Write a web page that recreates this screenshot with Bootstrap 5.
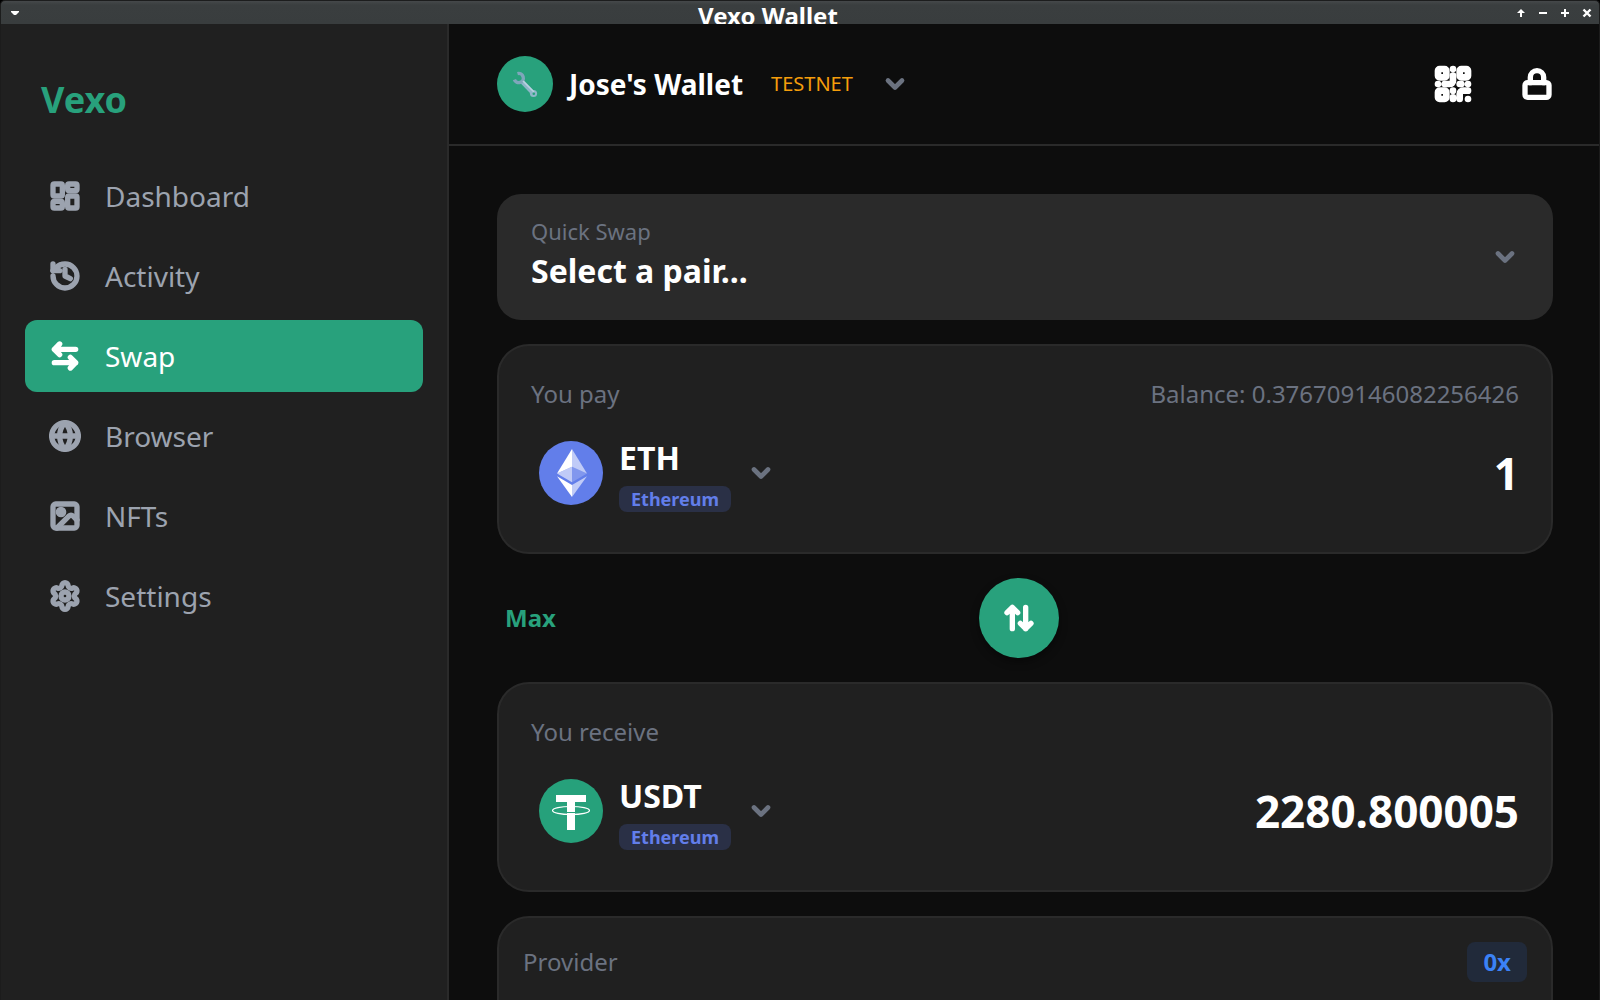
<!DOCTYPE html>
<html lang="en" data-bs-theme="dark">
<head>
<meta charset="utf-8">
<meta name="viewport" content="width=device-width, initial-scale=1">
<title>Vexo Wallet</title>
<link href="https://cdn.jsdelivr.net/npm/bootstrap@5.3.0/dist/css/bootstrap.min.css" rel="stylesheet">
<style>
:root { --green:#28a17c; --panel:#202020; --line:#2a2a2a; --base:#0d0d0d; --dim:#6b7280; --soft:#9ca3af; }
body { font-family:"Noto Sans", sans-serif; background:#000; color:#fff; font-size:24px; line-height:32px; }
svg { display:block; flex:none; }
.stroke { fill:none; stroke:currentColor; stroke-width:4; stroke-linecap:round; stroke-linejoin:round; }
.i28 { width:28px; height:28px; }
.i32 { width:32px; height:32px; }
.i40 { width:40px; height:40px; }
button { color:inherit; }
.plain { background:none; border:0; padding:0; }
.dim { color:var(--dim); }

.titlebar { height:24px; background:linear-gradient(#45484a, #3a3e3f 4px, #393d3e); border:solid #1c1d1d; border-width:1px 1px 0; border-radius:5px 5px 0 0; padding:0 7px 0 9px; overflow:hidden; }
.titlebar h1 { font-size:24px; line-height:30px; font-weight:700; height:23px; margin:0; }
.wm { width:10px; height:24px; display:flex; align-items:center; justify-content:center; }
.winctl { gap:12px; }

.app { border:solid #1c1c1c; border-width:0 1px; background:var(--base); min-height:0; }
.side { width:448px; background:var(--panel); border-right:2px solid var(--line); padding:24px; }
.brand { color:var(--green); font-size:36px; line-height:48px; font-weight:700; padding:28px 16px 36px; margin:0; }
.side .nav { gap:8px; }
.side .nav-link { display:flex; align-items:center; gap:24px; height:72px; padding:0 24px; border-radius:12px; font-size:28px; line-height:38px; color:var(--soft); }
.side .nav-link:hover { color:#fff; }
.side .nav-link.active { background:var(--green); color:#fff; }

.page { min-width:0; }
.topbar { padding:32px 46px 32px 48px; border-bottom:2px solid var(--line); }
.avatar { width:56px; height:56px; border-radius:50%; background:var(--green); }
.wallet-name { font-size:28px; line-height:40px; font-weight:700; }
.testnet { font-size:20px; line-height:28px; color:#f59e0b; margin:0 28px; }

.content { padding:48px 46px 0 48px; gap:24px; overflow:hidden; min-height:0; }
.content > * { flex:none; }
.quick { background:var(--line); border-radius:24px; padding:0 34px; text-align:left; height:126px; }
.quick .cap { font-size:22px; line-height:28px; }
.quick .pick { font-size:32px; line-height:44px; font-weight:700; }
.panel { background:var(--panel); border:2px solid var(--line); border-radius:32px; padding:32px; }
.token { padding:8px; gap:16px; text-align:left; }
.sym { font-size:32px; line-height:48px; font-weight:700; }
.chain { background:#2a3046; color:#627eea; font-size:18px; line-height:26px; font-weight:700; padding:0 12px; border-radius:8px; }
.amount { background:none; border:0; outline:0; color:#fff; font-size:44px; line-height:60px; font-weight:700; text-align:right; padding:0; min-width:0; flex:1; }
.maxbtn { color:var(--green); font-weight:700; padding:0 8px; }
.flip { width:80px; height:80px; border-radius:50%; background:var(--green); border:0; padding:0; color:#fff; box-shadow:0 4px 8px rgba(0,0,0,.4); }
.half { flex:1 1 0; }
.half-end { flex:1 1 12px; }
.provider { padding:24px; min-height:160px; }
.zerox { background:#212a3a; color:#3b82f6; font-weight:700; line-height:40px; padding:0 16px; border-radius:8px; }
</style>
<script src="https://cdn.jsdelivr.net/npm/bootstrap@5.3.0/dist/js/bootstrap.bundle.min.js"></script>
</head>
<body class="vh-100 overflow-hidden d-flex flex-column">

<svg width="0" height="0" class="position-absolute" aria-hidden="true">
  <symbol id="chev" viewBox="0 0 24 24"><path d="m6 9 6 6 6-6"/></symbol>
</svg>

<div class="titlebar d-flex justify-content-between flex-shrink-0">
  <button class="plain wm" aria-label="Window menu"><svg width="10" height="4" viewBox="0 0 10 4"><path d="M1 0h8v1L6 4H4L1 1z" fill="#fff"/></svg></button>
  <h1 class="flex-grow-1 text-center">Vexo Wallet</h1>
  <div class="d-flex winctl flex-shrink-0">
    <button class="plain wm" aria-label="Shade"><svg width="10" height="10" viewBox="0 0 10 10"><path d="M5 9V2" stroke="#fff" stroke-width="2"/><path d="M5 1 9 5H1z" fill="#fff"/></svg></button>
    <button class="plain wm" aria-label="Minimize"><svg width="10" height="10" viewBox="0 0 10 10"><path d="M1 5h8" stroke="#fff" stroke-width="2"/></svg></button>
    <button class="plain wm" aria-label="Maximize"><svg width="10" height="10" viewBox="0 0 10 10"><path d="M1 5h8M5 1v8" stroke="#fff" stroke-width="2"/></svg></button>
    <button class="plain wm" aria-label="Close"><svg width="10" height="10" viewBox="0 0 10 10"><path d="m1.500 1.500 7 7m0-7-7 7" stroke="#fff" stroke-width="2.400"/></svg></button>
  </div>
</div>

<div class="app d-flex flex-grow-1">
  <aside class="side flex-shrink-0">
    <p class="brand">Vexo</p>
    <nav class="nav flex-column">
      <a class="nav-link" href="#"><svg class="stroke i32" viewBox="0 0 24 24"><rect x="3" y="3" width="7" height="9" rx="1"/><rect x="14" y="3" width="7" height="5" rx="1"/><rect x="14" y="12" width="7" height="9" rx="1"/><rect x="3" y="16" width="7" height="5" rx="1"/></svg>Dashboard</a>
      <a class="nav-link" href="#"><svg class="stroke i32" viewBox="0 0 24 24"><path d="M3 12a9 9 0 1 0 9-9 9.75 9.75 0 0 0-6.740 2.740L3 8"/><path d="M3 3v5h5M12 7v5l4 2"/></svg>Activity</a>
      <a class="nav-link active" aria-current="page" href="#"><svg class="stroke i32" viewBox="0 0 24 24"><path d="M8 3 4 7l4 4M4 7h16M16 21l4-4-4-4M20 17H4"/></svg>Swap</a>
      <a class="nav-link" href="#"><svg class="stroke i32" viewBox="0 0 24 24"><circle cx="12" cy="12" r="10"/><path d="M12 2a14.500 14.500 0 0 0 0 20 14.500 14.500 0 0 0 0-20M2 12h20"/></svg>Browser</a>
      <a class="nav-link" href="#"><svg class="stroke i32" viewBox="0 0 24 24"><rect x="3" y="3" width="18" height="18" rx="2"/><circle cx="9" cy="9" r="2"/><path d="m21 15-3.086-3.086a2 2 0 0 0-2.828 0L6 21"/></svg>NFTs</a>
      <a class="nav-link" href="#"><svg class="stroke i32" viewBox="0 0 24 24"><path d="M9.671 4.136a2.340 2.340 0 0 1 4.659 0 2.340 2.340 0 0 0 3.319 1.915 2.340 2.340 0 0 1 2.330 4.033 2.340 2.340 0 0 0 0 3.831 2.340 2.340 0 0 1-2.330 4.033 2.340 2.340 0 0 0-3.319 1.915 2.340 2.340 0 0 1-4.659 0 2.340 2.340 0 0 0-3.320-1.915 2.340 2.340 0 0 1-2.330-4.033 2.340 2.340 0 0 0 0-3.831A2.340 2.340 0 0 1 6.350 6.051a2.340 2.340 0 0 0 3.319-1.915"/><circle cx="12" cy="12" r="3"/></svg>Settings</a>
    </nav>
  </aside>

  <main class="page flex-grow-1 d-flex flex-column">
    <header class="topbar d-flex align-items-center justify-content-between">
      <button class="plain d-flex align-items-center">
        <span class="avatar d-flex align-items-center justify-content-center me-3">
          <svg width="28" height="28" viewBox="0 0 28 28" fill="none"><path d="M10.500 11 22 23" stroke="#8fb6c9" stroke-width="4.500"/><circle cx="22.500" cy="23.500" r="3.600" fill="#8fb6c9"/><path d="M6.500 3.600A4.600 4.600 0 1 1 3.400 9.600" stroke="#7fa6bb" stroke-width="3.400"/><path d="M12 11 23 22" stroke="#b9d3e0" stroke-width="1.500"/><circle cx="22.800" cy="23.800" r="1.300" fill="#28a17c"/></svg>
        </span>
        <span class="wallet-name">Jose's Wallet</span>
        <span class="testnet">TESTNET</span>
        <svg class="stroke i28 dim"><use href="#chev"/></svg>
      </button>
      <div class="d-flex align-items-center gap-5">
        <button class="plain" aria-label="Show QR code"><svg class="stroke i40" viewBox="0 0 24 24"><rect x="3" y="3" width="5" height="5" rx="1"/><rect x="16" y="3" width="5" height="5" rx="1"/><rect x="3" y="16" width="5" height="5" rx="1"/><path d="M21 16h-3a2 2 0 0 0-2 2v3M21 21v.01M12 7v3a2 2 0 0 1-2 2H7M3 12h.01M12 3h.01M12 16v.01M16 12h1M21 12v.01M12 21v-1"/></svg></button>
        <button class="plain" aria-label="Lock wallet"><svg class="stroke i32" viewBox="0 0 24 24"><rect x="3" y="11" width="18" height="11" rx="2"/><path d="M7 11V7a5 5 0 0 1 10 0v4"/></svg></button>
      </div>
    </header>

    <div class="content d-flex flex-column flex-grow-1">
      <button class="plain quick d-flex align-items-center justify-content-between">
        <span class="d-flex flex-column gap-1 pb-1"><span class="cap dim">Quick Swap</span><span class="pick">Select a pair...</span></span>
        <svg class="stroke i28 dim"><use href="#chev"/></svg>
      </button>

      <section class="panel">
        <div class="d-flex justify-content-between dim"><label for="pay">You pay</label><span>Balance: 0.376709146082256426</span></div>
        <div class="d-flex align-items-center mt-3">
          <button class="plain token d-flex align-items-center">
            <svg width="64" height="64" viewBox="0 0 32 32"><circle cx="16" cy="16" r="16" fill="#627eea"/><g fill="#fff"><path fill-opacity=".6" d="M16.498 4v8.870l7.497 3.350z"/><path d="M16.498 4 9 16.220l7.498-3.350z"/><path fill-opacity=".6" d="M16.498 21.968v6.027L24 17.616z"/><path d="M16.498 27.995v-6.028L9 17.616z"/><path fill-opacity=".2" d="m16.498 20.573 7.497-4.353-7.497-3.348z"/><path fill-opacity=".6" d="m9 16.220 7.498 4.353v-7.701z"/></g></svg>
            <span class="d-flex flex-column align-items-start gap-1"><span class="sym">ETH</span><span class="chain">Ethereum</span></span>
            <svg class="stroke i28 dim"><use href="#chev"/></svg>
          </button>
          <input class="amount" id="pay" value="1" inputmode="decimal">
        </div>
      </section>

      <div class="d-flex align-items-center">
        <div class="half"><button class="plain maxbtn">Max</button></div>
        <button class="flip d-flex align-items-center justify-content-center" aria-label="Flip tokens"><svg class="stroke i32" viewBox="0 0 24 24"><path d="m3 8 4-4 4 4M7 4v16M21 16l-4 4-4-4M17 20V4"/></svg></button>
        <div class="half-end"></div>
      </div>

      <section class="panel">
        <div class="dim d-flex"><label for="receive">You receive</label></div>
        <div class="d-flex align-items-center mt-3">
          <button class="plain token d-flex align-items-center">
            <svg width="64" height="64" viewBox="0 0 64 64"><circle cx="32" cy="32" r="32" fill="#26a17b"/><path d="M17 16h30v7H36v28h-8V23H17z" fill="#fff"/><path d="M28 33.500h8" stroke="#26a17b"/><ellipse cx="32" cy="31.500" rx="18.500" ry="4" fill="none" stroke="#fff" stroke-width="1.200"/></svg>
            <span class="d-flex flex-column align-items-start gap-1"><span class="sym">USDT</span><span class="chain">Ethereum</span></span>
            <svg class="stroke i28 dim"><use href="#chev"/></svg>
          </button>
          <input class="amount" id="receive" value="2280.800005" readonly>
        </div>
      </section>

      <section class="panel provider">
        <div class="d-flex align-items-center justify-content-between"><span class="dim">Provider</span><span class="zerox">0x</span></div>
      </section>
    </div>
  </main>
</div>
</body>
</html>
